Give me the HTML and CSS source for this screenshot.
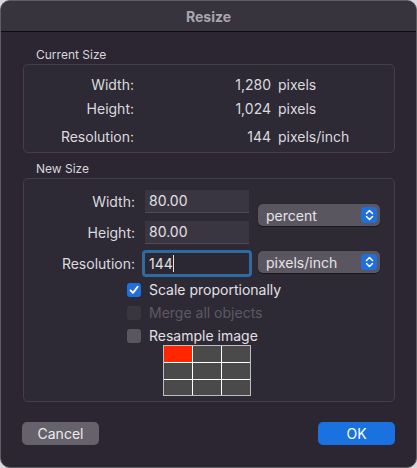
FILE: index.html
```html
<!DOCTYPE html>
<html>
<head>
<meta charset="utf-8">
<link rel="stylesheet" href="styles.css">
</head>
<body>
<div class="window">
  <div class="titlebar">Resize</div>
  <div class="content">
    <div class="section-label">Current Size</div>
    <div class="group current">
      <div class="info-grid">
        <span class="lbl">Width:</span><span class="val">1,280</span><span class="unit">pixels</span>
        <span class="lbl">Height:</span><span class="val">1,024</span><span class="unit">pixels</span>
        <span class="lbl last">Resolution:</span><span class="val last">144</span><span class="unit last">pixels/inch</span>
      </div>
    </div>
    <div class="section-label second">New Size</div>
    <div class="group newsize">
      <div class="form">
        <div class="fields">
          <div class="frow"><span class="flbl">Width:</span><div class="field">80.00</div></div>
          <div class="frow"><span class="flbl">Height:</span><div class="field">80.00</div></div>
          <div class="frow focus-row"><span class="flbl">Resolution:</span><div class="field focused">144<span class="caret"></span></div></div>
        </div>
        <div class="popups">
          <div class="popup upper"><span>percent</span><span class="stepper"><svg width="9" height="12" viewBox="0 0 9 12"><path d="M1.5 4.5 L4.5 1.5 L7.5 4.5 M1.5 7.5 L4.5 10.5 L7.5 7.5" fill="none" stroke="#fff" stroke-width="1.5" stroke-linecap="round" stroke-linejoin="round"/></svg></span></div>
          <div class="popup lower"><span>pixels/inch</span><span class="stepper"><svg width="9" height="12" viewBox="0 0 9 12"><path d="M1.5 4.5 L4.5 1.5 L7.5 4.5 M1.5 7.5 L4.5 10.5 L7.5 7.5" fill="none" stroke="#fff" stroke-width="1.5" stroke-linecap="round" stroke-linejoin="round"/></svg></span></div>
        </div>
      </div>
      <div class="checks">
        <div class="check"><span class="box on"><svg width="12" height="12" viewBox="0 0 12 12"><path d="M2.5 6.3 L5 8.8 L9.6 2.8" fill="none" stroke="#fff" stroke-width="1.9" stroke-linecap="round" stroke-linejoin="round"/></svg></span><span>Scale proportionally</span></div>
        <div class="check disabled"><span class="box"></span><span>Merge all objects</span></div>
        <div class="check"><span class="box"></span><span>Resample image</span></div>
      </div>
      <div class="anchor">
        <div class="cell sel"></div><div class="cell"></div><div class="cell"></div>
        <div class="cell"></div><div class="cell"></div><div class="cell"></div>
        <div class="cell"></div><div class="cell"></div><div class="cell"></div>
      </div>
    </div>
    <div class="buttons">
      <div class="btn cancel">Cancel</div>
      <div class="btn ok">OK</div>
    </div>
  </div>
</div>
</body>
</html>
```

FILE: styles.css
```css
html, body {
  margin: 0;
  padding: 0;
  background: #d9d9db;
}
body {
  font-family: Inter, "Noto Sans", sans-serif;
  font-size: 14px;
  color: #dcdadf;
}
.window {
  width: 417px;
  height: 468px;
  box-sizing: border-box;
  border: 1px solid #5f5d64;
  border-radius: 10px;
  background: #2b2632;
  overflow: hidden;
  display: flex;
  flex-direction: column;
}
.titlebar {
  height: 30px;
  flex: none;
  background: #37343e;
  border-bottom: 1px solid #0e0c10;
  color: #a9a7ad;
  font-weight: 700;
  font-size: 14px;
  display: flex;
  align-items: center;
  justify-content: center;
}
.content {
  padding: 15px 21px 0 22px;
  display: flex;
  flex-direction: column;
}
.section-label {
  font-size: 12px;
  color: #d8d6da;
  padding-left: 13px;
  height: 16px;
  line-height: 16px;
  margin-bottom: 1px;
}
.section-label.second {
  margin-top: 8px;
}
.group {
  border: 1px solid #433f49;
  border-radius: 5px;
  background: #2e2a35;
}
.current {
  height: 89px;
  box-sizing: border-box;
  padding-top: 7px;
}
.info-grid {
  display: grid;
  grid-template-columns: 110px 137px auto;
  grid-template-rows: 24px 24px 28px;
  align-items: center;
}
.info-grid .lbl {
  text-align: right;
}
.info-grid .val {
  text-align: right;
}
.info-grid .unit {
  padding-left: 7px;
}
.info-grid .last {
  padding-top: 4px;
}
.newsize {
  height: 224px;
  box-sizing: border-box;
  padding-top: 11px;
}
.form {
  display: flex;
}
.fields {
  display: flex;
  flex-direction: column;
  gap: 8px;
}
.frow {
  display: flex;
  align-items: center;
}
.flbl {
  width: 121px;
  text-align: right;
  padding-right: 10px;
  box-sizing: border-box;
}
.field {
  width: 104px;
  height: 23px;
  box-sizing: border-box;
  background: #3a3641;
  border-bottom: 1px solid #4f4b55;
  padding-left: 4px;
  line-height: 22px;
  color: #e2e0e5;
}
.focus-row {
  margin-top: -2px;
}
.field.focused {
  width: 110px;
  height: 27px;
  margin-left: -3px;
  border: 3px solid #2f6aa0;
  border-radius: 4px;
  background: #2c2833;
  line-height: 21px;
  padding-left: 4px;
}
.caret {
  display: inline-block;
  width: 1px;
  height: 17px;
  background: #e6e6e6;
  vertical-align: -3px;
}
.popups {
  margin-left: 6px;
  padding-top: 14px;
  display: flex;
  flex-direction: column;
  gap: 25px;
}
.popup {
  width: 122px;
  height: 22px;
  box-sizing: border-box;
  background: #5a5660;
  border-radius: 5px;
  display: flex;
  align-items: center;
  justify-content: space-between;
  padding: 0 3px 0 8px;
  color: #e6e4e8;
  box-shadow: 0 0.5px 1px rgba(0,0,0,0.4);
}
.stepper {
  width: 16px;
  height: 16px;
  border-radius: 4px;
  background: #1f6fdc;
  display: flex;
  align-items: center;
  justify-content: center;
}
.checks {
  margin-top: 5px;
  padding-left: 103px;
  display: flex;
  flex-direction: column;
  gap: 8px;
}
.check {
  display: flex;
  align-items: center;
  gap: 8px;
  height: 15px;
  color: #e2e0e5;
}
.check.disabled {
  color: #5d5962;
}
.box {
  width: 14px;
  height: 14px;
  box-sizing: border-box;
  border-radius: 3px;
  background: #5a5660;
  display: flex;
  align-items: center;
  justify-content: center;
}
.check.disabled .box {
  background: #3a3640;
}
.box.on {
  background: #1f6fdc;
}
.anchor {
  margin: 2px 0 0 139px;
  width: 88px;
  box-sizing: border-box;
  border: 1px solid #bdbdbd;
  background: #ffffff;
  display: grid;
  grid-template-columns: 28px 28px 28px;
  grid-template-rows: 16px 16px 15px;
  gap: 1px;
}
.cell {
  background: #4a4a4a;
}
.cell.sel {
  background: #ff2600;
}
.buttons {
  margin-top: 20px;
  display: flex;
  justify-content: space-between;
}
.btn {
  width: 77px;
  height: 23px;
  border-radius: 5px;
  display: flex;
  align-items: center;
  justify-content: center;
}
.cancel {
  margin-left: -1px;
  background: #66626b;
  color: #ecebee;
}
.ok {
  background: #1a72e0;
  color: #ffffff;
}
```
